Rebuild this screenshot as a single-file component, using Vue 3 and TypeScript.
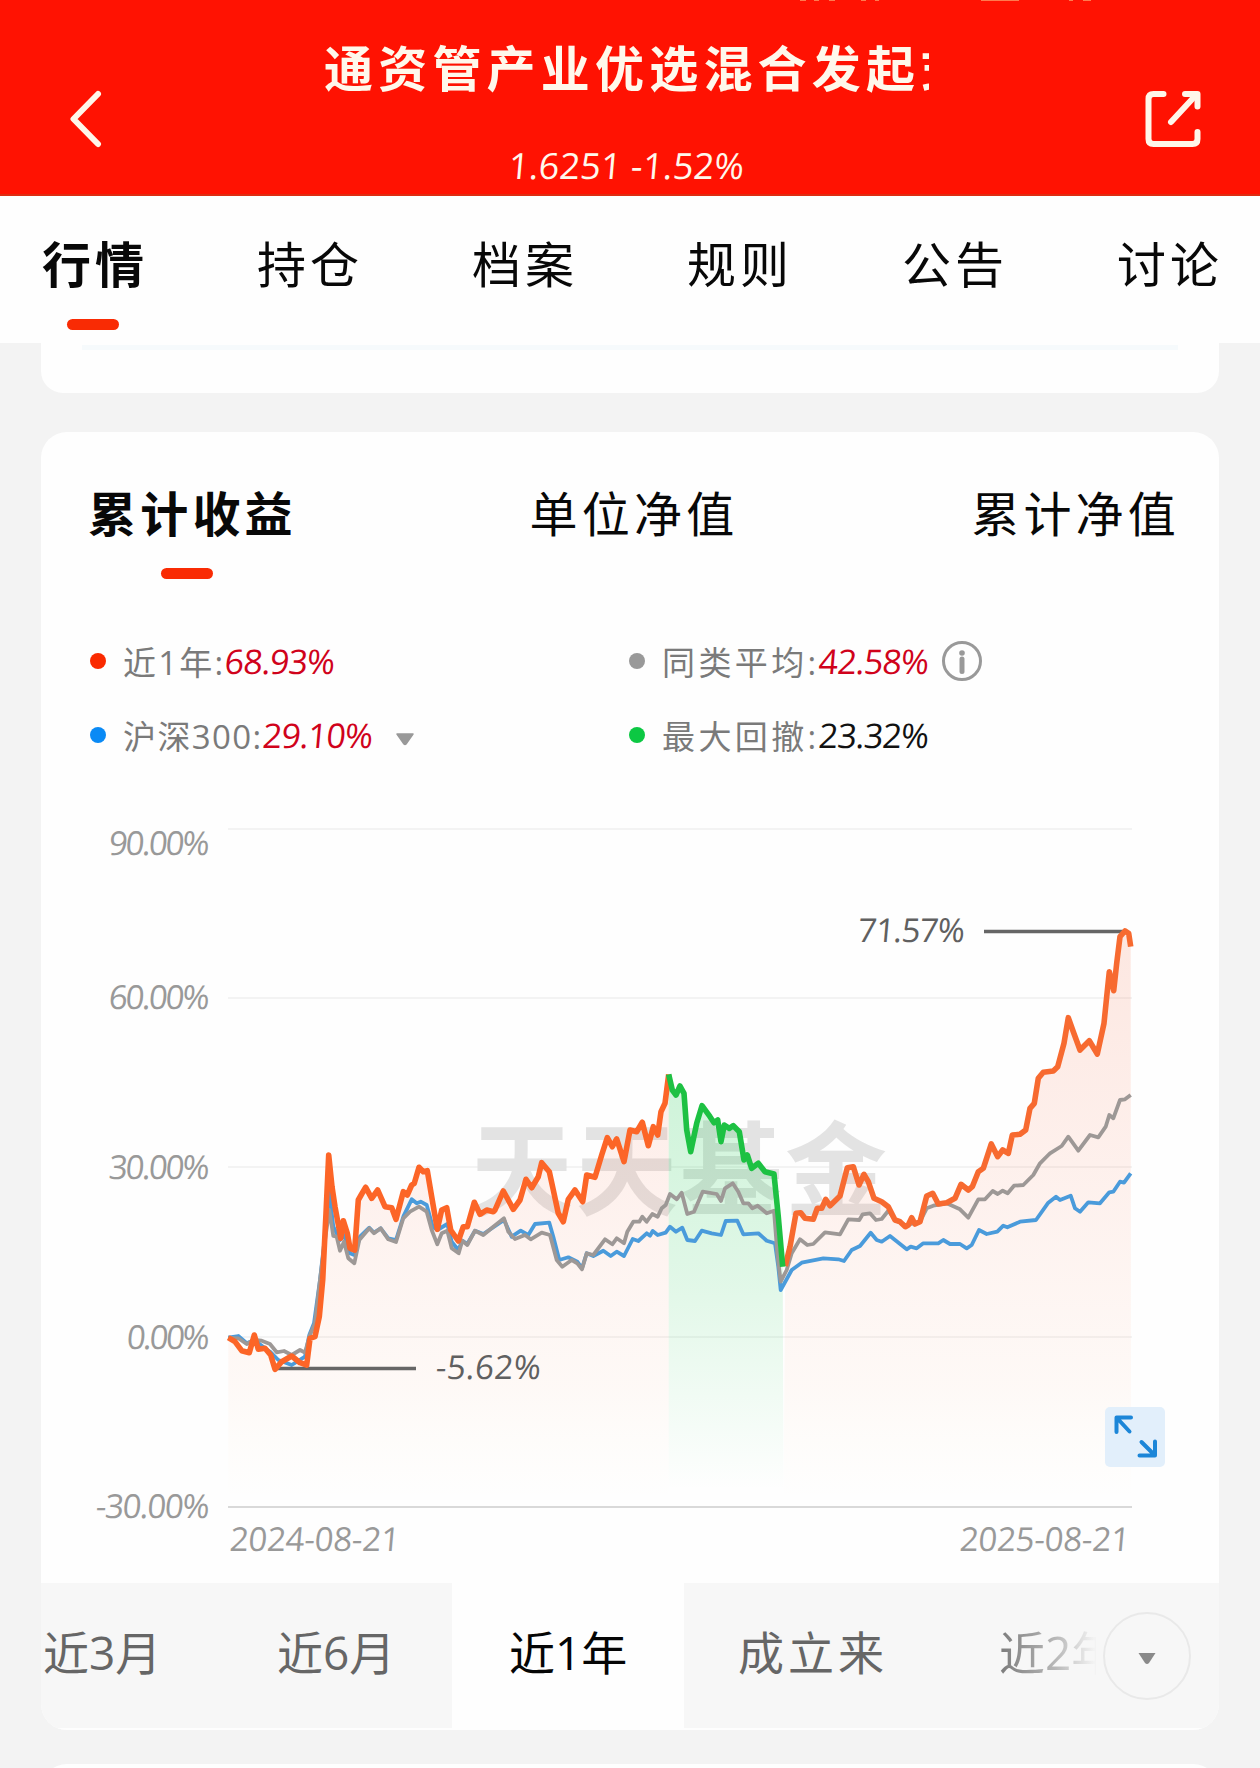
<script setup lang="ts">
interface Legend { label: string; value: string; color: string; labelWidth: number; spacing: number; dark?: boolean; extra?: 'info' | 'caret' }
type Segment = [originX: number, originY: number, points: string]

const tabs: string[] = ['行情', '持仓', '档案', '规则', '公告', '讨论']
const metrics: string[] = ['累计收益', '单位净值', '累计净值']
const legends: Legend[] = [
  { label: '近1年:', value: '68.93%', color: '#fa2a00', labelWidth: 102, spacing: 2.2 },
  { label: '同类平均:', value: '42.58%', color: '#999999', labelWidth: 157, spacing: 3.4, extra: 'info' },
  { label: '沪深300:', value: '29.10%', color: '#0a8af5', labelWidth: 140, spacing: 1.4, extra: 'caret' },
  { label: '最大回撤:', value: '23.32%', color: '#0cc843', labelWidth: 157, spacing: 3.4, dark: true },
]
const yTicks = [
  { text: '90.00%', line: 829, base: 855, x: 109 },
  { text: '60.00%', line: 998, base: 1009, x: 109 },
  { text: '30.00%', line: 1167, base: 1179, x: 109 },
  { text: '0.00%', line: 1337, base: 1349, x: 127 },
  { text: '-30.00%', line: 1507, base: 1518, x: 96 },
]

// Points are stored at three units per pixel, relative to each segment's origin.
const toPoints = (segments: Segment[]): string =>
  segments
    .map(([ox, oy, pts]) =>
      pts
        .split(' ')
        .map((p) => {
          const [x, y] = p.split(',').map(Number)
          return `${(ox + x / 3).toFixed(1)},${(oy + y / 3).toFixed(1)}`
        })
        .join(' '),
    )
    .join(' ')

const fundRise = toPoints([
  [210, 1040, '55,893 75,905 95,932 118,938 133,885 145,928 165,925 182,945 195,988 215,965 245,948 270,968 290,975 300,895 315,890 328,830 338,720 348,520 356,345 366,440 375,500 388,570 392,595 400,542 412,580 420,625 434,630 445,480 455,462 467,442 485,475 503,450 525,500 545,503 558,538 580,455 592,465 605,435 613,430 627,382 640,395 652,392 665,470 682,568 695,510 710,503 722,570 745,603 760,560 772,560 793,487 810,523 830,510 850,515'],
  [490, 1040, '15,510 40,453 70,508 90,480 108,418 125,443 145,410 155,368 178,395 190,450 205,520 220,545 235,478 255,450 278,485 290,405 315,412 335,345 352,293 367,320 380,297 402,365 420,270 440,275 457,247 475,317 490,260 503,285 513,215 525,190 536,103'],
])
const drawdown = toPoints([
  [490, 1040, '536,103 547,150 558,165 570,138 582,160 590,270 602,335 620,250 636,197 660,230 672,248 683,240 693,305 703,255 718,265 730,257 748,275 762,360 772,345 785,385 805,370 825,395 852,402 865,530 878,680'],
])
const fundRecover = toPoints([
  [760, 1040, '76,678 90,620 108,520 122,518 135,535 160,538 172,505 185,505 197,478 210,497 240,468 262,383 280,380 297,435 312,403 325,425 342,475 365,485 385,500 405,540 420,545 436,560 445,555 455,533 465,552 480,545 500,468 518,460 535,492 560,488 585,475 603,433 625,450 637,440 655,395 670,385 694,312 713,350 728,330 745,340 757,285 780,283 797,270 810,205 823,190 835,115 850,97 880,93 893,80'],
  [920, 900, '432,430 445,353 460,395 480,450 508,422 532,462 552,370 560,290 568,215 581,272 590,190 600,110 615,93 626,100 632,140'],
])
const peers = toPoints([
  [210, 1040, '55,893 85,895 110,912 133,900 155,902 180,912 200,937 222,933 245,945 270,930 285,938 298,890 315,850 330,720 345,600 358,510 370,588 380,590 390,632 402,605 415,655 433,670 448,600 478,565 492,580 512,565 535,598 558,606 580,535 600,515 627,500 650,515 665,570 682,613 695,580 712,572 725,625 746,640 757,602 772,615 795,572 820,585 850,560 882,535'],
  [490, 1040, '55,575 75,597 105,585 122,598 155,578 180,585 200,660 217,680 245,660 262,670 276,688 290,640 310,645 345,598 367,613 380,595 402,610 412,575 430,545 448,545 457,530 470,545 487,522 503,530 515,505 527,495 540,462 560,478 575,458 592,522 612,515 638,455 680,462 693,483 705,445 728,430 745,455 760,490 775,490 787,505 803,497 830,520 852,512 862,640 872,725'],
  [760, 1040, '80,690 95,640 120,598 142,615 160,612 195,577 240,583 265,538 298,540 308,523 330,520 348,540 365,537 385,512 405,540 436,556 480,545 500,505 520,497 560,490 600,508 625,533 655,478 675,478 698,453 713,462 728,452 743,460 762,437 790,435 820,405 840,370 865,345'],
  [920, 900, '390,760 425,738 445,710 475,752 510,705 535,712 557,680 568,645 580,655 600,600 615,598 632,585'],
])
const csi300 = toPoints([
  [210, 1040, '55,893 85,888 110,910 133,900 165,925 180,935 205,960 245,975 285,950 298,885 312,850 330,720 348,560 356,440 370,560 390,600 402,585 420,640 433,645 450,590 478,563 492,578 512,565 535,595 558,600 580,530 605,478 620,490 632,485 650,495 668,560 682,570 712,552 725,605 745,630 757,602 772,612 795,572 820,582 860,555 882,540'],
  [490, 1040, '65,590 92,572 115,585 135,552 178,548 190,590 208,660 235,652 262,665 276,685 290,640 310,648 340,632 362,648 380,635 402,648 428,597 445,603 470,580 480,587 488,573 503,585 527,578 540,560 558,575 577,563 592,600 615,603 635,572 665,580 693,585 707,543 742,542 760,583 805,580 830,602 855,610 865,680 872,750'],
  [760, 1040, '95,690 125,668 190,655 235,658 252,663 275,630 300,618 332,578 350,600 365,605 390,588 440,628 452,620 470,625 490,610 535,610 550,600 570,612 600,612 620,625 635,615 657,570 680,582 712,575 730,557 742,562 780,545 828,540'],
  [920, 900, '385,908 408,890 420,900 452,887 465,925 480,935 505,907 540,910 568,877 580,875 600,845 612,848 632,820'],
])
</script>

<template>
  <main class="page">
    <header class="header">
      <svg class="back" width="34" height="60" viewBox="68 89 34 60"><path d="M98 94 73.500 119 98 144" /></svg>
      <div class="heading">
        <h1>通资管产业优选混合发起式</h1>
        <p>1.6251 -1.52%</p>
      </div>
      <svg class="share" width="60" height="62" viewBox="1143 88 60 62">
        <path d="M1163.500 94h-10q-5 0-5 5v40q0 5 5 5h39q5 0 5-5v-7M1171 122l25-27" /><path d="M1185 94h12.500v12.500" />
      </svg>
      <svg class="status" width="300" height="3" viewBox="0 0 300 3"><path d="M3 0h6m8 0h5m10 0h6m26 0h5m9 0h4M184 0h38m50 0h4m10 0h8" /></svg>
    </header>

    <nav class="tabs">
      <span v-for="(tab, i) in tabs" :key="tab" :class="{ active: i === 0 }">{{ tab }}</span>
    </nav>

    <section class="card previous"><i></i></section>

    <section class="card performance">
      <nav class="metrics">
        <span v-for="(m, i) in metrics" :key="m" :class="{ active: i === 0 }">{{ m }}</span>
      </nav>

      <div class="legends">
        <div v-for="l in legends" :key="l.label" class="legend">
          <i :style="{ background: l.color }"></i>
          <span class="label" :style="{ width: l.labelWidth + 'px', letterSpacing: l.spacing + 'px' }">{{ l.label }}</span>
          <b :class="{ dark: l.dark }">{{ l.value }}</b>
          <svg v-if="l.extra === 'info'" class="info" width="42" height="42" viewBox="0 0 42 42">
            <circle cx="21" cy="21" r="18.500" fill="none" stroke="#999" stroke-width="3" />
            <circle cx="21" cy="13" r="2.800" fill="#999" /><path d="M21 19v12.500" stroke="#999" stroke-width="5" stroke-linecap="round" />
          </svg>
          <svg v-if="l.extra === 'caret'" class="caret" width="20" height="13" viewBox="0 0 20 13"><path d="M2 1h16L11 11q-1 1-2 0z" fill="#999" stroke="#999" stroke-width="1.500" stroke-linejoin="round" /></svg>
        </div>
      </div>

      <svg class="chart" width="1178" height="783" viewBox="41 800 1178 783">
        <defs>
          <linearGradient id="warm" gradientUnits="userSpaceOnUse" x1="0" y1="930" x2="0" y2="1500">
            <stop offset="0" stop-color="#f4592e" stop-opacity=".14" />
            <stop offset=".5" stop-color="#fa5d2e" stop-opacity=".075" />
            <stop offset=".8" stop-color="#fa7d3e" stop-opacity=".04" />
            <stop offset="1" stop-color="#fac04e" stop-opacity="0" />
          </linearGradient>
          <linearGradient id="cool" gradientUnits="userSpaceOnUse" x1="0" y1="1075" x2="0" y2="1490">
            <stop offset="0" stop-color="#0cc843" stop-opacity=".2" />
            <stop offset=".5" stop-color="#0cc843" stop-opacity=".12" />
            <stop offset="1" stop-color="#0cc843" stop-opacity="0" />
          </linearGradient>
        </defs>
        <line v-for="t in yTicks" :key="t.text" x1="228" x2="1132" :y1="t.line" :y2="t.line" :stroke="t.line === 1507 ? '#d9d9d9' : '#f3f3f3'" stroke-width="2" />
        <text class="watermark" x="471" y="1208" textLength="416">天天基金</text>
        <polygon :points="`228.300,1507 ${fundRise} 668.700,1507`" fill="url(#warm)" />
        <polygon :points="`668.700,1507 ${drawdown} 783.500,1507`" fill="url(#cool)" />
        <polygon :points="`783.500,1507 ${fundRecover} 1131,1507`" fill="url(#warm)" />
        <g class="series">
          <polyline :points="csi300" stroke="#4a9bdb" stroke-width="3.800" />
          <polyline :points="peers" stroke="#9d9896" stroke-width="3.800" />
          <path d="M276 1368.500H416M984 931.500h140" stroke="#666" stroke-width="3.400" />
          <polyline :points="fundRise" stroke="#fc6527" stroke-width="5.600" />
          <polyline :points="fundRecover" stroke="#f76a30" stroke-width="5.600" />
          <polyline :points="drawdown" stroke="#1dc143" stroke-width="5.600" />
        </g>
        <g class="axis">
          <text v-for="t in yTicks" :key="t.text" :x="t.x" :y="t.base" :textLength="210 - t.x">{{ t.text }}</text>
          <text x="230" y="1551" textLength="170">2024-08-21</text>
          <text x="960" y="1551" textLength="170">2025-08-21</text>
        </g>
        <g class="axis mark">
          <text x="858" y="942" textLength="107">71.57%</text>
          <text x="436" y="1379" textLength="105">-5.62%</text>
        </g>
        <g class="expand">
          <rect x="1105" y="1407" width="60" height="60" rx="5" />
          <path d="M1116.500 1432v-14.500H1131M1117 1418l12.500 13.500M1155 1441.500V1455.500H1139.500M1154.500 1455 1141.500 1442" />
        </g>
      </svg>

      <div class="ranges">
        <span class="r3">近3月</span>
        <span class="r6">近6月</span>
        <span class="r1 current">近1年</span>
        <span class="since">成立来</span>
        <span class="r2">近2年</span>
        <button class="more" aria-label="更多">
          <svg width="20" height="13" viewBox="0 0 20 13"><path d="M1.500 1h17L12 11q-2 2-4 0z" fill="#8a8a8a" /></svg>
        </button>
      </div>
    </section>

    <section class="card next"></section>
  </main>
</template>

<style>
body { margin: 0; background: #f3f3f3; }
</style>

<style scoped>
.page { width: 1260px; height: 1768px; overflow: hidden; background: #f3f3f3; color: #080808; font-family: "Open Sans", "Noto Sans CJK SC", sans-serif; }
.header { position: relative; box-sizing: border-box; height: 196px; background: #ff1202; border-bottom: 2px solid #de2c12; display: flex; justify-content: space-between; align-items: flex-start; padding: 0 57px 0 68px; }
.header path { fill: none; stroke: #fff6ea; stroke-width: 6; stroke-linecap: round; stroke-linejoin: round; }
.back { margin-top: 89px; }
.share { margin-top: 88px; }
.status { position: absolute; top: 0; left: 797px; }
.header .status path { stroke: #ff7a4e; stroke-width: 2; stroke-linecap: butt; }
.heading { width: 605px; margin-right: -8px; color: #fff8ec; }
h1 { margin: 33px 0 0; height: 70px; line-height: 70px; font-size: 49px; letter-spacing: 5.2px; font-weight: 700; white-space: nowrap; overflow: hidden; }
.heading p { margin: 39px 0 0; line-height: 48px; font-size: 36px; text-align: center; letter-spacing: .1px; transform: skewX(-5deg); }
.tabs { box-sizing: border-box; height: 147px; background: #fefefe; display: flex; justify-content: space-between; padding: 31px 37px 0 42px; }
.tabs span { font-size: 49px; letter-spacing: 4px; line-height: 74px; position: relative; }
.active { font-weight: 700; }
.tabs .active::after, .metrics .active::after { content: ""; position: absolute; width: 52px; height: 11px; border-radius: 6px; background: #f92b04; left: 25px; top: 92px; }
.card { width: 1178px; margin: 0 auto; background: #fefefe; overflow: hidden; }
.previous { height: 50px; border-radius: 0 0 22px 22px; padding-top: 0; }
.previous i { display: block; margin: 2px 41px 0; height: 5px; background: #f6fafc; }
.performance { margin-top: 39px; height: 1298px; border-radius: 26px; display: flex; flex-direction: column; }
.metrics { flex: 0 0 146px; display: flex; justify-content: space-between; padding: 45px 39px 0 47px; box-sizing: border-box; }
.metrics span { position: relative; font-size: 48px; letter-spacing: 4.2px; line-height: 74px; height: 74px; }
.metrics .active::after { left: 73px; top: 91px; }
.legends { flex: 0 0 222px; box-sizing: border-box; padding: 46px 0 0 49px; display: grid; grid-template-columns: 539px 1fr; grid-template-rows: 74px 74px; }
.legend { display: flex; align-items: center; font-size: 33px; white-space: nowrap; }
.legend i { width: 16px; height: 16px; border-radius: 50%; flex: none; margin-right: 17px; }
.label { color: #7a7a7a; }
.legend b { font-weight: 400; color: #d0021b; width: 110px; font-size: 34px; letter-spacing: -.9px; transform: skewX(-5deg); }
.legend b.dark { color: #111; }
.info { margin-left: 12px; }
.caret { margin: 8px 0 0 22px; }
.chart { flex: none; display: block; }
.watermark { font: 700 102px "Noto Sans CJK SC", sans-serif; fill: #e3e3e3; }
.series { fill: none; stroke-linejoin: round; }
.axis { font-size: 33px; fill: #999; }
.axis text { transform-box: fill-box; transform-origin: center; transform: skewX(-5deg); }
.mark { fill: #606060; }
.expand rect { fill: #e2effb; }
.expand path { fill: none; stroke: #1c86d8; stroke-width: 4; stroke-linecap: round; stroke-linejoin: round; }
.ranges { position: relative; height: 147px; box-sizing: border-box; border-bottom: 2px solid #fefefe; background: #f7f7f7; display: flex; font-size: 46px; line-height: 139px; color: #666; white-space: nowrap; }
.ranges span { box-sizing: border-box; flex: none; }
.r3 { width: 234px; padding-left: 2px; }
.r6 { width: 177px; padding-left: 2px; }
.ranges .current { width: 232px; padding-left: 57px; background: #fefefe; color: #050505; }
.since { width: 311px; padding-left: 54px; letter-spacing: 4px; }
.r2 { width: 101px; overflow: hidden; padding-left: 4px; color: transparent; background: linear-gradient(90deg, #777 0, #b8b8b8 60%, #f3f3f3 98%); background-clip: text; -webkit-background-clip: text; }
.more { flex: none; box-sizing: border-box; width: 88px; height: 88px; margin: 29px 0 0 7px; border: 2px solid #e9e9e9; border-radius: 50%; background: #f7f7f7; display: flex; align-items: center; justify-content: center; padding: 4px 0 0; }
.more svg { flex: none; }
.next { margin-top: 34px; height: 30px; border-radius: 26px 26px 0 0; }
</style>
